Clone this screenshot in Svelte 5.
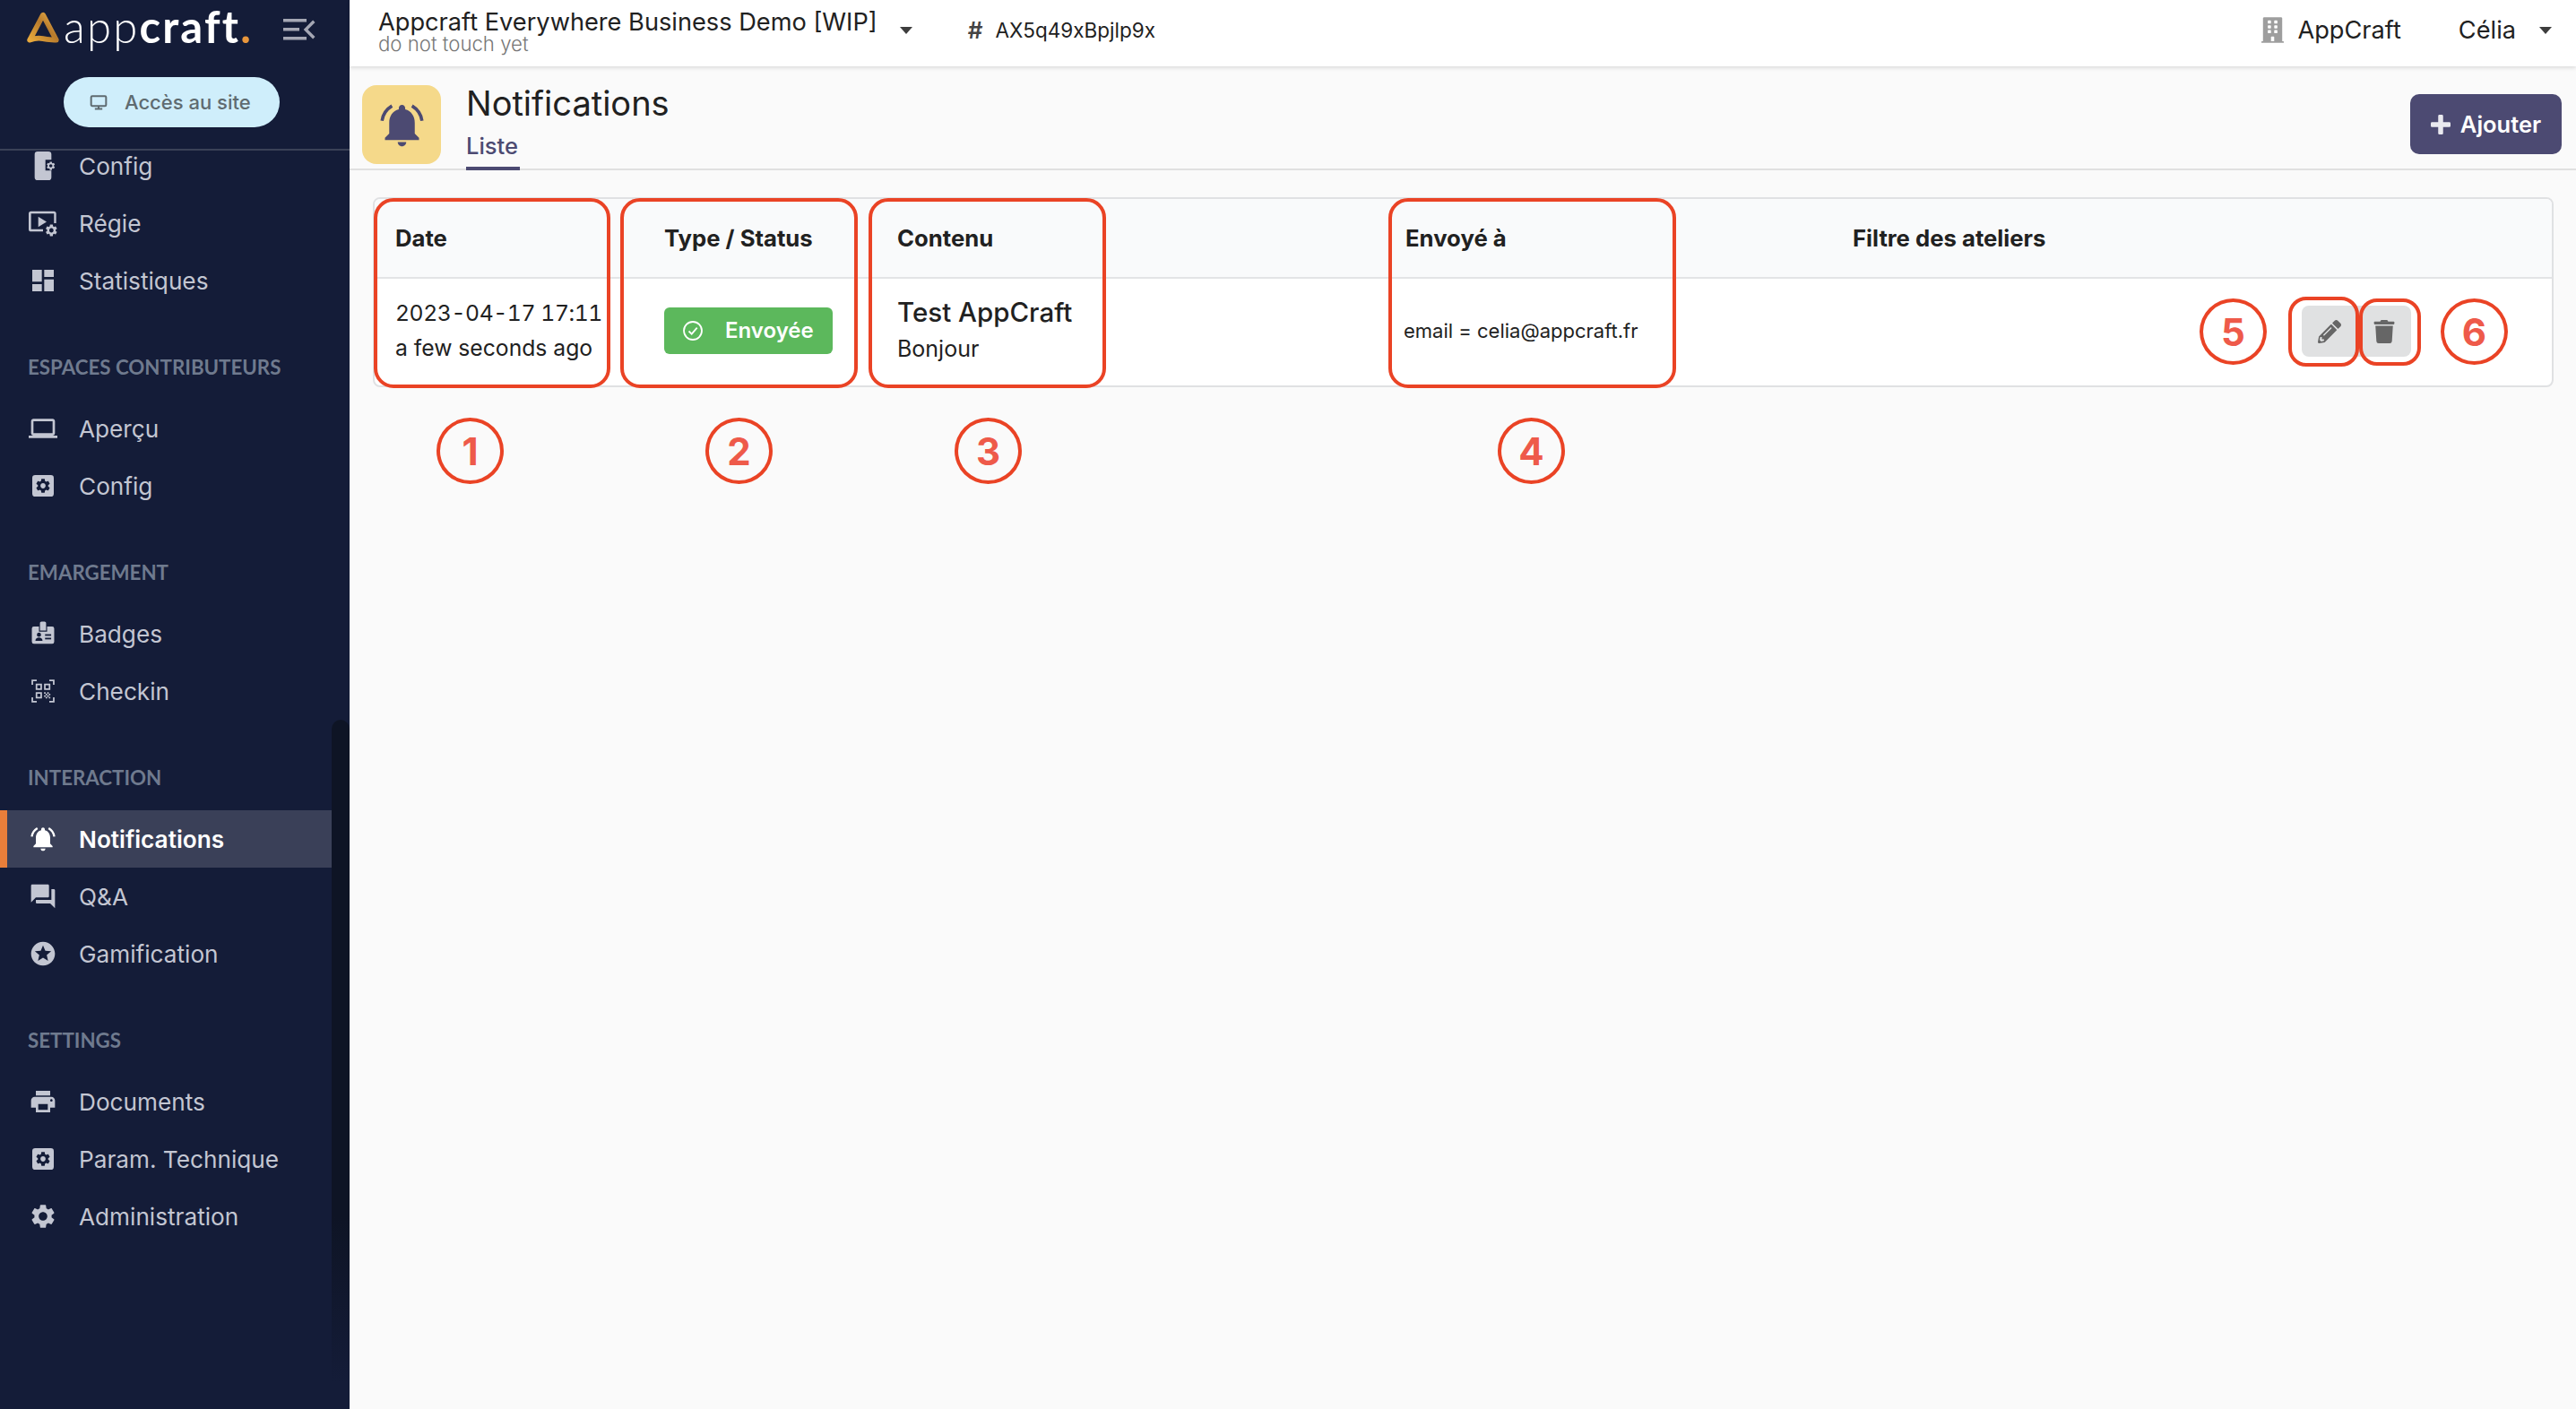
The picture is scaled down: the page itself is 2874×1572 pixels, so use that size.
<script>
	const sections = [
		{
			items: [
				{ icon: 'mobile', label: 'Config' },
				{ icon: 'screen', label: 'Régie' },
				{ icon: 'dashboard', label: 'Statistiques' }
			]
		},
		{
			title: 'ESPACES CONTRIBUTEURS',
			items: [
				{ icon: 'laptop', label: 'Aperçu' },
				{ icon: 'gearbox', label: 'Config' }
			]
		},
		{
			title: 'EMARGEMENT',
			items: [
				{ icon: 'badge', label: 'Badges' },
				{ icon: 'qr', label: 'Checkin' }
			]
		},
		{
			title: 'INTERACTION',
			items: [
				{ icon: 'bell', label: 'Notifications', active: true },
				{ icon: 'forum', label: 'Q&A' },
				{ icon: 'star', label: 'Gamification' }
			]
		},
		{
			title: 'SETTINGS',
			items: [
				{ icon: 'print', label: 'Documents' },
				{ icon: 'gearbox', label: 'Param. Technique' },
				{ icon: 'gear', label: 'Administration' }
			]
		}
	];

	// red review marks drawn over the screenshot
	const boxes = [
		{ x: 417, y: 221, w: 264, h: 212, r: 22 },
		{ x: 692, y: 221, w: 265, h: 212, r: 22 },
		{ x: 969, y: 221, w: 265, h: 212, r: 22 },
		{ x: 1549, y: 221, w: 321, h: 212, r: 22 },
		{ x: 2553, y: 331, w: 79, h: 78, r: 20 },
		{ x: 2632, y: 333, w: 69, h: 75, r: 20 }
	];
	const marks = [
		{ n: 1, x: 487, y: 466 },
		{ n: 2, x: 787, y: 466 },
		{ n: 3, x: 1065, y: 466 },
		{ n: 4, x: 1671, y: 466 },
		{ n: 5, x: 2454, y: 333 },
		{ n: 6, x: 2723, y: 333 }
	];

	const gearPath =
		'M19.14 12.94c.04-.3.06-.61.06-.94 0-.32-.02-.64-.07-.94l2.03-1.58c.18-.14.23-.41.12-.61l-1.92-3.32c-.12-.22-.37-.29-.59-.22l-2.39.96c-.5-.38-1.03-.7-1.62-.94l-.36-2.54c-.04-.24-.24-.41-.48-.41h-3.84c-.24 0-.43.17-.47.41l-.36 2.54c-.59.24-1.13.57-1.62.94l-2.39-.96c-.22-.08-.47 0-.59.22L2.74 8.87c-.12.21-.08.47.12.61l2.03 1.58c-.05.3-.09.63-.09.94s.02.64.07.94l-2.03 1.58c-.18.14-.23.41-.12.61l1.92 3.32c.12.22.37.29.59.22l2.39-.96c.5.38 1.03.7 1.62.94l.36 2.54c.05.24.24.41.48.41h3.84c.24 0 .44-.17.47-.41l.36-2.54c.59-.24 1.13-.56 1.62-.94l2.39.96c.22.08.47 0 .59-.22l1.92-3.32c.12-.22.07-.47-.12-.61l-2.01-1.58zM12 15.6c-1.98 0-3.6-1.62-3.6-3.6s1.62-3.6 3.6-3.6 3.6 1.62 3.6 3.6-1.62 3.6-3.6 3.6z';
	const bellPath =
		'M12 22c1.1 0 2-.9 2-2h-4c0 1.1.89 2 2 2zm6-6v-5c0-3.07-1.64-5.64-4.5-6.32V4c0-.83-.67-1.5-1.5-1.5s-1.5.67-1.5 1.5v.68C7.63 5.36 6 7.92 6 11v5l-2 2v1h16v-1l-2-2z';
	const bellArcs = 'M2.6 10C3 7.2 4.8 4.5 7.3 3M21.4 10C21 7.2 19.2 4.5 16.7 3';
</script>

{#snippet icon(name)}
	<svg class="nav-icon" viewBox="0 0 24 24" fill="currentColor" fill-rule="evenodd">
		{#if name === 'mobile'}
			<path d="M5 2.5A2.5 2.5 0 0 1 7.5 0h9A2.5 2.5 0 0 1 19 2.5V7h-5v9h5v5.5a2.5 2.5 0 0 1-2.5 2.5h-9A2.5 2.5 0 0 1 5 21.5z" />
			<path transform="translate(14.2 7.7) scale(.36)" d={gearPath} />
		{:else if name === 'screen'}
			<path d="M2 2h19a2 2 0 0 1 2 2v8h-1.8V4H2v13h10v2H2a2 2 0 0 1-2-2V4a2 2 0 0 1 2-2z" />
			<path d="M8 6.5l7 4.3-7 4.3z" />
			<path transform="translate(13 12) scale(.5)" d={gearPath} />
		{:else if name === 'dashboard'}
			<path d="M3 13h8V3H3v10zm0 8h8v-6H3v6zm10 0h8V11h-8v10zm0-18v6h8V3h-8z" />
		{:else if name === 'laptop'}
			<path d="M20 18c1.1 0 1.99-.9 1.99-2L22 6c0-1.1-.9-2-2-2H4c-1.1 0-2 .9-2 2v10c0 1.1.9 2 2 2H0v2h24v-2h-4zM4 6h16v10H4V6z" />
		{:else if name === 'gearbox'}
			<rect x="3" y="3" width="18" height="18" rx="2.5" />
			<path class="cut" transform="translate(4.8 4.8) scale(.6)" d={gearPath} />
		{:else if name === 'badge'}
			<g transform="translate(1.8 1.8) scale(.85)">
				<path d="M10.5 0h3A1.5 1.5 0 0 1 15 1.5V9H9V1.5A1.5 1.5 0 0 1 10.5 0z" />
				<path d="M3 5h5v5h8V5h5a2 2 0 0 1 2 2v13a2 2 0 0 1-2 2H3a2 2 0 0 1-2-2V7a2 2 0 0 1 2-2z" />
				<circle class="cut" cx="8" cy="13" r="2" />
				<path class="cut" d="M4.5 19c0-2.2 1.5-3.2 3.5-3.2s3.5 1 3.5 3.2z" />
				<rect class="cut" x="14" y="12.5" width="6" height="1.6" />
				<rect class="cut" x="14" y="16" width="6" height="1.6" />
			</g>
		{:else if name === 'qr'}
			<g transform="translate(1.5 1.5) scale(.875)">
				<path d="M1 1h5v1.5H2.5V6H1zm17 0h5v5h-1.5V2.5H18zM1 18h1.5v3.5H6V23H1zm20.5 0H23v5h-5v-1.5h3.5z" />
				<path d="M5 5h6v6H5zm1.5 1.5v3h3v-3zM13 5h6v6h-6zm1.5 1.5v3h3v-3zM5 13h6v6H5zm1.5 1.5v3h3v-3z" />
				<path d="M13 13h1.5v1.5H13zm3 0h1.5v1.5H16zm-1.5 1.5H16V16h-1.5zm3 0H19V16h-1.5zM13 16h1.5v1.5H13zm3 0h1.5v1.5H16zm-1.5 1.5H16V19h-1.5zm3 0H19V19h-1.5z" />
			</g>
		{:else if name === 'bell'}
			<path d={bellPath} />
			<path d={bellArcs} fill="none" stroke="currentColor" stroke-width="1.8" />
		{:else if name === 'forum'}
			<path d="M21 6h-2v9H6v2c0 .55.45 1 1 1h11l4 4V7c0-.55-.45-1-1-1zm-4 6V3c0-.55-.45-1-1-1H3c-.55 0-1 .45-1 1v14l4-4h10c.55 0 1-.45 1-1z" />
		{:else if name === 'star'}
			<path d="M12 2C6.47 2 2 6.48 2 12s4.47 10 10 10c5.52 0 10-4.48 10-10S17.52 2 12 2zm4.24 16L12 15.45 7.77 18l1.12-4.81-3.73-3.23 4.92-.42L12 5l1.92 4.53 4.92.42-3.73 3.23L16.23 18z" />
		{:else if name === 'print'}
			<path d="M19 8H5c-1.66 0-3 1.34-3 3v6h4v4h12v-4h4v-6c0-1.66-1.34-3-3-3zm-3 11H8v-5h8v5zm3-7c-.55 0-1-.45-1-1s.45-1 1-1 1 .45 1 1-.45 1-1 1zm-1-9H6v4h12V3z" />
		{:else if name === 'gear'}
			<path d={gearPath} />
		{/if}
	</svg>
{/snippet}

<div class="app">
	<aside class="sidebar">
		<div class="brand">
			<div class="logo-row">
				<svg class="logo-mark" viewBox="0 0 36 36" fill="none">
					<defs>
						<linearGradient id="gold" x1="0" y1="1" x2="1" y2="0">
							<stop offset="0" stop-color="#e8a93c" />
							<stop offset=".55" stop-color="#b77a2c" />
							<stop offset="1" stop-color="#eab04a" />
						</linearGradient>
					</defs>
					<path d="M18 3.5L4 30c5-2 9-2.5 14-1.5s9 1 14 1.5z" stroke="url(#gold)" stroke-width="5.5" stroke-linejoin="round" />
				</svg>
				<span class="wordmark"><span class="thin">app</span><span class="bold">craft</span><span class="dot">.</span></span>
				<svg class="collapse" viewBox="0 0 36 24" fill="#a5a7b4">
					<path d="M0 0h26v3.5H0zM0 10h18v3.5H0zM0 20h26v3.5H0z" />
					<path d="M35.5 4l-8 8 8 8-2.4 2.4L22.7 12 33.1 1.6z" />
				</svg>
			</div>
			<button class="site-btn">
				<svg viewBox="0 0 24 24" fill="none" stroke="currentColor" stroke-width="2.4">
					<rect x="2" y="4" width="20" height="13" rx="1.5" />
					<path d="M12 17v3.5M7 21h10" />
				</svg>
				<span>Accès au site</span>
			</button>
		</div>

		<nav class="nav">
			<div class="nav-inner">
				{#each sections as section}
					{#if section.title}
						<div class="section-title">{section.title}</div>
					{/if}
					{#each section.items as item}
						<div class="nav-item" class:active={item.active}>
							<span class="icon-wrap">{@render icon(item.icon)}</span>
							<span>{item.label}</span>
						</div>
					{/each}
				{/each}
			</div>
			<div class="scroll-thumb"></div>
		</nav>
	</aside>

	<main class="main">
		<header class="topbar">
			<div class="project">
				<div class="project-name">Appcraft Everywhere Business Demo [WIP]</div>
				<div class="project-sub">do not touch yet</div>
			</div>
			<svg class="caret first" viewBox="0 0 14 8"><path d="M0 0h14L7 8z" /></svg>
			<span class="hash">#</span>
			<span class="code">AX5q49xBpjlp9x</span>
			<div class="top-right">
				<svg class="building" viewBox="0 0 448 512" fill="#9e9e9e"><path fill-rule="evenodd" d="M436 480h-20V24c0-13.3-10.7-24-24-24H56C42.7 0 32 10.7 32 24v456H12c-6.6 0-12 5.4-12 12v20h448v-20c0-6.6-5.4-12-12-12zM128 76c0-6.6 5.4-12 12-12h40c6.6 0 12 5.4 12 12v40c0 6.6-5.4 12-12 12h-40c-6.6 0-12-5.4-12-12V76zm0 96c0-6.6 5.4-12 12-12h40c6.6 0 12 5.4 12 12v40c0 6.6-5.4 12-12 12h-40c-6.6 0-12-5.4-12-12v-40zm52 148h-40c-6.6 0-12-5.4-12-12v-40c0-6.6 5.4-12 12-12h40c6.6 0 12 5.4 12 12v40c0 6.6-5.4 12-12 12zm76 160h-64v-84c0-6.6 5.4-12 12-12h40c6.6 0 12 5.4 12 12v84zm64-172c0 6.6-5.4 12-12 12h-40c-6.6 0-12-5.4-12-12v-40c0-6.6 5.4-12 12-12h40c6.6 0 12 5.4 12 12v40zm0-96c0 6.6-5.4 12-12 12h-40c-6.6 0-12-5.4-12-12v-40c0-6.6 5.4-12 12-12h40c6.6 0 12 5.4 12 12v40zm0-96c0 6.6-5.4 12-12 12h-40c-6.6 0-12-5.4-12-12V76c0-6.6 5.4-12 12-12h40c6.6 0 12 5.4 12 12v40z" /></svg>
				<span class="org">AppCraft</span>
				<span class="user">Célia</span>
				<svg class="caret" viewBox="0 0 14 8"><path d="M0 0h14L7 8z" /></svg>
			</div>
		</header>

		<section class="page-head">
			<div class="page-icon">
				<svg viewBox="0 0 24 24" fill="#4c4a72">
					<path d={bellPath} />
					<path d={bellArcs} fill="none" stroke="#4c4a72" stroke-width="1.5" />
				</svg>
			</div>
			<div class="page-titles">
				<h1>Notifications</h1>
				<div class="tab">Liste</div>
			</div>
			<button class="add-btn">
				<svg viewBox="0 0 24 24" fill="#e9e9ef"><path d="M9 1.5A1.5 1.5 0 0 1 10.5 0h3A1.5 1.5 0 0 1 15 1.5V9h7.5A1.5 1.5 0 0 1 24 10.5v3a1.5 1.5 0 0 1-1.5 1.5H15v7.5a1.5 1.5 0 0 1-1.5 1.5h-3A1.5 1.5 0 0 1 9 22.5V15H1.5A1.5 1.5 0 0 1 0 13.5v-3A1.5 1.5 0 0 1 1.5 9H9z" /></svg>
				<span>Ajouter</span>
			</button>
		</section>

		<section class="content">
			<div class="table">
				<div class="row head">
					<div class="cell date">Date</div>
					<div class="cell type">Type / Status</div>
					<div class="cell body">Contenu</div>
					<div class="cell sent">Envoyé à</div>
					<div class="cell filter">Filtre des ateliers</div>
				</div>
				<div class="row data">
					<div class="cell date">
						<div class="when">2023-04-17 17:11</div>
						<div class="ago">a few seconds ago</div>
					</div>
					<div class="cell type">
						<span class="status">
							<svg viewBox="0 0 24 24" fill="none" stroke="#fff" stroke-width="1.8">
								<circle cx="12" cy="12" r="10" />
								<path d="M7.5 12.5l3.2 3.2 6-7" />
							</svg>
							Envoyée
						</span>
					</div>
					<div class="cell body">
						<div class="msg-title">Test AppCraft</div>
						<div class="msg-text">Bonjour</div>
					</div>
					<div class="cell sent"><span class="email">email = celia@appcraft.fr</span></div>
					<div class="cell filter"></div>
					<div class="actions">
						<button class="act" aria-label="Modifier">
							<svg viewBox="0 0 512 512" fill="#666"><path fill-rule="evenodd" d="M497.9 142.1l-46.1 46.1c-4.7 4.7-12.3 4.7-17 0l-111-111c-4.7-4.7-4.7-12.3 0-17l46.1-46.1c18.7-18.7 49.1-18.7 67.9 0l60.1 60.1c18.8 18.7 18.8 49.1 0 67.9zM284.2 99.8L21.6 362.4.4 483.9c-2.9 16.4 11.4 30.6 27.8 27.8l121.5-21.3 262.6-262.6c4.7-4.7 4.7-12.3 0-17l-111-111c-4.8-4.7-12.4-4.7-17.1 0zM124.1 339.9c-5.5-5.5-5.5-14.3 0-19.8l154-154c5.5-5.5 14.3-5.5 19.8 0s5.5 14.3 0 19.8l-154 154c-5.5 5.5-14.3 5.5-19.8 0zM88 424h48v36.3l-64.5 11.3-31.1-31.1L51.7 376H88v48z" /></svg>
						</button>
						<button class="act" aria-label="Supprimer">
							<svg viewBox="0 0 448 512" fill="#666"><path d="M432 32H312l-9.4-18.7A24 24 0 0 0 281.1 0H166.8a23.72 23.72 0 0 0-21.4 13.3L136 32H16A16 16 0 0 0 0 48v32a16 16 0 0 0 16 16h416a16 16 0 0 0 16-16V48a16 16 0 0 0-16-16zM53.2 467a48 48 0 0 0 47.9 45h245.8a48 48 0 0 0 47.9-45L416 128H32z" /></svg>
						</button>
					</div>
				</div>
			</div>
		</section>
	</main>

	{#each boxes as b}
		<div class="mark-box" style="left:{b.x}px;top:{b.y}px;width:{b.w}px;height:{b.h}px;border-radius:{b.r}px"></div>
	{/each}
	{#each marks as m}
		<div class="mark-num" style="left:{m.x}px;top:{m.y}px">{m.n}</div>
	{/each}
</div>

<style>
	:global(body) {
		margin: 0;
		background: #fafafa;
	}

	.app {
		position: relative;
		display: flex;
		height: 1572px;
		overflow: hidden;
		font-family: Inter, "Liberation Sans", sans-serif;
		color: #212121;
	}

	button {
		font-family: inherit;
		border: none;
		cursor: pointer;
	}

	.sidebar {
		width: 390px;
		flex-shrink: 0;
		display: flex;
		flex-direction: column;
		background: #141c38;
	}

	.brand {
		height: 168px;
		flex-shrink: 0;
		box-sizing: border-box;
		border-bottom: 2px solid #3a4157;
	}

	.logo-row {
		display: flex;
		align-items: center;
		height: 86px;
		padding: 0 0 20px 29px;
		box-sizing: border-box;
	}

	.logo-mark {
		width: 38px;
		height: 38px;
		margin-bottom: 2px;
	}

	.wordmark {
		margin: 0 0 9px 4px;
		font-family: Lato, sans-serif;
		font-size: 49px;
		line-height: 60px;
		color: #fff;
		letter-spacing: 2.2px;
		width: 245px;
	}

	.thin {
		font-weight: 300;
	}

	.bold {
		font-weight: 700;
	}

	.dot {
		color: #e8963c;
		font-weight: 700;
	}

	.collapse {
		width: 36px;
		height: 24px;
	}

	.site-btn {
		display: flex;
		align-items: center;
		width: 241px;
		height: 56px;
		margin-left: 71px;
		padding: 0 0 0 29px;
		border-radius: 28px;
		background: #cfeefb;
		color: #5f6b70;
		font-size: 22px;
		font-weight: 500;
	}

	.site-btn svg {
		width: 20px;
		height: 20px;
		margin-right: 19px;
	}

	.nav {
		position: relative;
		flex: 1;
		overflow: hidden;
	}

	.nav-inner {
		width: 370px;
		margin-top: -15px;
	}

	.section-title {
		height: 101px;
		box-sizing: border-box;
		padding: 50px 0 0 31px;
		font-family: Lato, sans-serif;
		font-size: 22.3px;
		font-weight: 700;
		line-height: 30px;
		color: #6f7a8e;
	}

	.nav-item {
		display: flex;
		align-items: center;
		height: 64px;
		font-size: 26.2px;
		color: #c3c6d2;
	}

	.icon-wrap {
		width: 88px;
		flex-shrink: 0;
		display: flex;
		justify-content: center;
		padding-left: 7px;
		box-sizing: border-box;
	}

	.nav-icon {
		width: 32px;
		height: 32px;
		display: block;
	}

	.cut {
		fill: #141c38;
	}

	.nav-item.active {
		background: #3a4058;
		box-shadow: inset 8px 0 0 #e87e3a;
		color: #fff;
		font-weight: 600;
	}

	.scroll-thumb {
		position: absolute;
		right: 0;
		top: 635px;
		width: 20px;
		height: 740px;
		border-radius: 10px 10px 0 0;
		background: linear-gradient(#0e1425 75%, #141c38);
	}

	.main {
		flex: 1;
		min-width: 0;
		display: flex;
		flex-direction: column;
	}

	.topbar {
		position: relative;
		z-index: 1;
		display: flex;
		align-items: center;
		height: 74px;
		flex-shrink: 0;
		box-sizing: border-box;
		padding: 0 27px 7px 32px;
		background: #fff;
		box-shadow: 0 2px 4px rgba(0, 0, 0, 0.12);
	}

	.project-name {
		font-size: 27.2px;
		line-height: 30px;
		white-space: nowrap;
	}

	.project-sub {
		font-size: 22.2px;
		line-height: 18px;
		font-weight: 300;
		color: #777;
	}

	.caret {
		width: 14px;
		height: 8px;
		fill: #3d3d3d;
	}

	.caret.first {
		margin: 0 60px 0 25px;
	}

	.hash {
		font-size: 26px;
		font-weight: 600;
		color: #444;
		margin: 0 14px 0 2px;
	}

	.code {
		font-size: 22.5px;
	}

	.top-right {
		display: flex;
		align-items: center;
		margin-left: auto;
		font-size: 27.2px;
	}

	.building {
		width: 25px;
		height: 29px;
		margin-right: 15px;
	}

	.user {
		margin: 0 26px 0 64px;
	}

	.page-head {
		display: flex;
		height: 116px;
		flex-shrink: 0;
		box-sizing: border-box;
		border-bottom: 2px solid #e0e0e0;
		padding: 21px 16px 0 14px;
	}

	.page-icon {
		width: 88px;
		height: 88px;
		border-radius: 16px;
		background: #f5d98a;
		display: flex;
		align-items: center;
		justify-content: center;
	}

	.page-icon svg {
		width: 57px;
		height: 57px;
	}

	.page-titles {
		margin-left: 28px;
		margin-top: -3px;
	}

	h1 {
		margin: 0;
		font-size: 38px;
		font-weight: 400;
		line-height: 46px;
	}

	.tab {
		width: 60px;
		margin-top: 10px;
		height: 42px;
		box-sizing: border-box;
		font-size: 25.5px;
		line-height: 30px;
		font-weight: 500;
		color: #4c4a72;
		border-bottom: 4px solid #4c4a72;
	}

	.add-btn {
		display: flex;
		align-items: center;
		justify-content: center;
		width: 169px;
		height: 67px;
		margin: 10px 0 0 auto;
		border-radius: 10px;
		background: #4c4a72;
		color: #fff;
		font-size: 25.5px;
		font-weight: 600;
	}

	.add-btn svg {
		width: 22px;
		height: 22px;
		margin-right: 11px;
	}

	.content {
		padding: 30px 25px 0 26px;
	}

	.table {
		border: 2px solid #e0e1e3;
		border-radius: 8px;
		background: #fff;
		overflow: hidden;
	}

	.row {
		position: relative;
		display: grid;
		grid-template-columns: 299px 259px 569px 499px 1fr;
	}

	.row.head {
		height: 87px;
		align-items: center;
		background: #f9fafb;
		border-bottom: 2px solid #e3e4e6;
		font-size: 25.7px;
		font-weight: 700;
	}

	.row.data {
		height: 119px;
		box-sizing: border-box;
		padding-bottom: 4px;
		align-items: center;
	}

	.cell {
		padding-left: 23px;
	}

	.cell.body {
		padding-left: 25px;
	}

	.head .type {
		padding-left: 24px;
	}

	.when,
	.ago {
		font-size: 24.7px;
		line-height: 39px;
	}

	.when {
		font-variant-numeric: tabular-nums;
		letter-spacing: -0.4px;
	}

	.status {
		display: inline-flex;
		align-items: center;
		width: 188px;
		height: 52px;
		margin-left: 1px;
		box-sizing: border-box;
		padding-left: 20px;
		border-radius: 6px;
		background: #5cb85c;
		color: #fff;
		font-size: 24px;
		font-weight: 600;
	}

	.status svg {
		width: 24px;
		height: 24px;
		margin-right: 24px;
	}

	.msg-title {
		font-size: 29.5px;
		font-weight: 500;
		line-height: 40px;
	}

	.msg-text {
		font-size: 25px;
		line-height: 42px;
	}

	.email {
		font-size: 22px;
		margin-left: -2px;
	}

	.actions {
		position: absolute;
		right: 157px;
		top: 30px;
		display: flex;
		border-radius: 8px;
		overflow: hidden;
	}

	.act {
		display: flex;
		align-items: center;
		justify-content: center;
		width: 61px;
		height: 57px;
		padding: 0;
		background: #e0e1e2;
	}

	.act svg {
		width: 26px;
		height: 26px;
	}

	.mark-box {
		position: absolute;
		box-sizing: border-box;
		border: 4.5px solid #ea4325;
		z-index: 2;
	}

	.mark-num {
		position: absolute;
		z-index: 2;
		width: 75px;
		height: 74px;
		box-sizing: border-box;
		border: 4.5px solid #ea4325;
		border-radius: 50%;
		display: flex;
		align-items: center;
		justify-content: center;
		font-size: 42px;
		font-weight: 700;
		color: #ee5a4a;
	}
</style>
